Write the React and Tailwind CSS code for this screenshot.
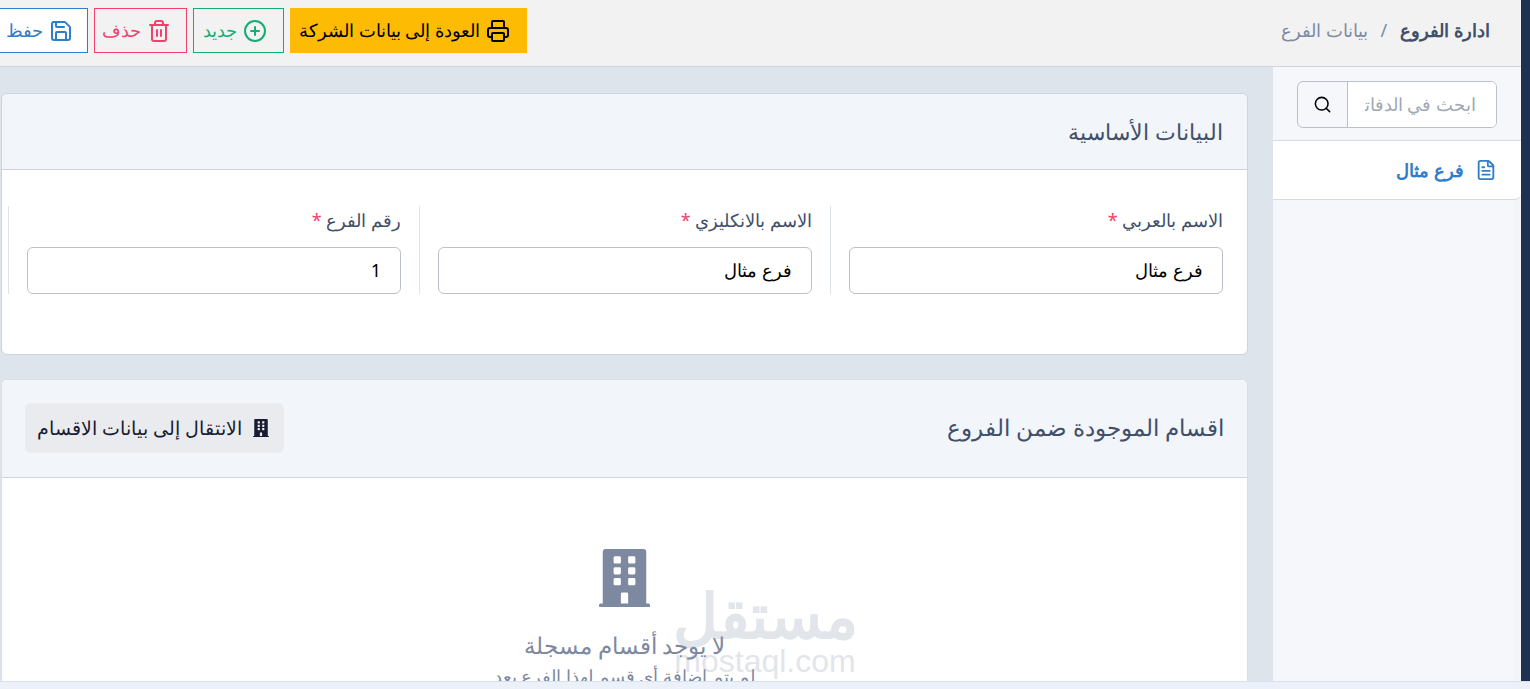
import React from 'react';
import { Printer, CirclePlus, Trash2, Save, Search, FileText } from 'lucide-react';

const BuildingSolid = ({ className }) => (
    <svg viewBox="0 0 448 512" className={className} fill="currentColor">
        <path d="M436 480h-20V24c0-13.255-10.745-24-24-24H56C42.745 0 32 10.745 32 24v456H12c-6.627 0-12 5.373-12 12v20h448v-20c0-6.627-5.373-12-12-12zM128 76c0-6.627 5.373-12 12-12h40c6.627 0 12 5.373 12 12v40c0 6.627-5.373 12-12 12h-40c-6.627 0-12-5.373-12-12V76zm0 96c0-6.627 5.373-12 12-12h40c6.627 0 12 5.373 12 12v40c0 6.627-5.373 12-12 12h-40c-6.627 0-12-5.373-12-12v-40zm52 148h-40c-6.627 0-12-5.373-12-12v-40c0-6.627 5.373-12 12-12h40c6.627 0 12 5.373 12 12v40c0 6.627-5.373 12-12 12zm76 160h-64v-84c0-6.627 5.373-12 12-12h40c6.627 0 12 5.373 12 12v84zm64-172c0 6.627-5.373 12-12 12h-40c-6.627 0-12-5.373-12-12v-40c0-6.627 5.373-12 12-12h40c6.627 0 12 5.373 12 12v40zm0-96c0 6.627-5.373 12-12 12h-40c-6.627 0-12-5.373-12-12v-40c0-6.627 5.373-12 12-12h40c6.627 0 12 5.373 12 12v40zm0-96c0 6.627-5.373 12-12 12h-40c-6.627 0-12-5.373-12-12V76c0-6.627 5.373-12 12-12h40c6.627 0 12 5.373 12 12v40z" />
    </svg>
);

const Field = ({ label, value }) => (
    <div className="w-[411px] shrink-0 border-l border-[#dfe3ea] pr-[18px] pl-[18px]">
        <label className="block h-[41px] text-[18px] leading-[28px] text-[#414f6b]">
            {label} <span className="text-[#f1416c]">*</span>
        </label>
        <div className="h-[47px] rounded-md border border-[#bcc0cb] bg-white px-[19px] text-[18px] leading-[45px] text-black">{value}</div>
    </div>
);

const ActionButton = ({ children, className }) => (
    <button className={`flex h-[45px] shrink-0 items-center justify-center gap-[6px] border pr-[8px] text-[18px] ${className}`}>{children}</button>
);

export default function App() {
    return (
        <div className="relative h-[689px] w-[1530px] overflow-hidden bg-[#dde4ec] font-['Noto_Sans',sans-serif]">
            <div dir="rtl" className="flex h-full w-[1521px] flex-col">
                {/* top bar */}
                <header className="flex h-[67px] shrink-0 items-start justify-between border-b border-[#cdd3df] bg-[#f2f2f2] pt-[8px] pr-[31px]">
                    <div className="flex h-[45px] items-center gap-[13px] text-[18px]">
                        <span className="font-bold text-[#414f6b]">ادارة الفروع</span>
                        <span className="text-[#7e8aa3]">/</span>
                        <span className="text-[#7e8aa3]">بيانات الفرع</span>
                    </div>
                    <div className="ml-[-1px] flex items-center gap-[6px]">
                        <ActionButton className="w-[237px] border-[#fdbc03] bg-[#fdbc03] text-black"><Printer size={24} />العودة إلى بيانات الشركة</ActionButton>
                        <ActionButton className="w-[91px] border-[#12ae72] text-[#12ae72]"><CirclePlus size={24} />جديد</ActionButton>
                        <ActionButton className="w-[93px] border-[#f1416c] text-[#f1416c]"><Trash2 size={24} />حذف</ActionButton>
                        <ActionButton className="w-[89px] border-[#2f7dcc] bg-white text-[#2f7dcc]"><Save size={24} />حفظ</ActionButton>
                    </div>
                </header>

                <div className="flex min-h-0 flex-1">
                    {/* side list */}
                    <aside className="w-[248px] shrink-0 bg-[#f5f7fb]">
                        <div className="h-[73px] pt-[14px] pr-[24px] pl-[24px]">
                            <div className="flex h-[47px] overflow-hidden rounded-md border border-[#bcc0cb]">
                                <div className="min-w-0 flex-1 bg-white pr-[20px] pl-[17px]">
                                    <div className="overflow-hidden text-[18px] leading-[45px] whitespace-nowrap text-[#a1a8b5]">ابحث في الدفاتر</div>
                                </div>
                                <div className="flex w-[50px] shrink-0 items-center justify-center border-r border-[#bcc0cb]"><Search size={19} className="text-black" /></div>
                            </div>
                        </div>
                        <div className="flex h-[60px] items-center gap-[11px] rounded-br-md border-y border-[#d5dae4] bg-white pr-6 text-[18px] font-bold text-[#2f7dcc]">
                            <FileText size={22} />فرع مثال
                        </div>
                    </aside>

                    {/* main column */}
                    <main className="min-w-0 flex-1 pt-[26px] pr-[25px] pl-[1px]">
                        <section className="h-[262px] rounded-md border border-[#cdd3df] bg-white">
                            <div className="flex h-[76px] items-center rounded-t-md border-b border-[#cdd3df] bg-[#f2f5fa] px-6 text-[22px] text-[#414f6b]">البيانات الأساسية</div>
                            <div className="flex pt-[36px] pr-[6px]">
                                <Field label="الاسم بالعربي" value="فرع مثال" />
                                <Field label="الاسم بالانكليزي" value="فرع مثال" />
                                <Field label="رقم الفرع" value="1" />
                            </div>
                        </section>

                        <section className="mt-[24px] h-[302px] overflow-hidden rounded-t-md border-x border-t border-[#d9dee7] bg-white">
                            <div className="flex h-[98px] items-center justify-between rounded-t-md border-b border-[#cdd3df] bg-[#f2f5fa] pr-[23px] pb-[1px] pl-[23px]">
                                <span className="text-[22.5px] text-[#414f6b]">اقسام الموجودة ضمن الفروع</span>
                                <button className="flex h-[50px] w-[259px] items-center justify-center gap-[11px] rounded-md bg-[#e9ebee] pr-[3px] text-[18.5px] text-[#181c32]">
                                    <BuildingSolid className="h-[18px] w-[16px]" />
                                    الانتقال إلى بيانات الاقسام
                                </button>
                            </div>
                            <div className="flex flex-col items-center pt-[71px]">
                                <BuildingSolid className="h-[58px] w-[51px] text-[#7d88a1]" />
                                <div className="mt-[19px] text-[23px] leading-[38px] text-[#7d88a1]">لا يوجد أقسام مسجلة</div>
                                <div className="text-[18px] leading-[24px] text-[#7d88a1]">لم يتم إضافة أي قسم لهذا الفرع بعد</div>
                            </div>
                        </section>
                    </main>
                </div>
            </div>

            {/* right edge strip */}
            <div className="absolute top-0 right-0 h-full w-[9px] bg-[#1f3150]" />
            <div className="absolute top-[200px] right-[9px] bottom-0 w-[8px] bg-[#f4f5f7]" />
            {/* bottom strip */}
            <div className="absolute right-0 bottom-0 left-0 h-[8px] border-t border-[#d5e1f2] bg-[#ecf1f9]" />
            {/* watermark */}
            <div dir="ltr" className="pointer-events-none absolute top-[583px] left-[672px] flex w-[186px] flex-col items-center text-[#8d99ae] opacity-25">
                <span className="text-[62px] leading-[62px] font-bold">مستقل</span>
                <span className="font-['Liberation_Sans'] text-[32px] leading-[32px]">mostaql.com</span>
            </div>
        </div>
    );
}
